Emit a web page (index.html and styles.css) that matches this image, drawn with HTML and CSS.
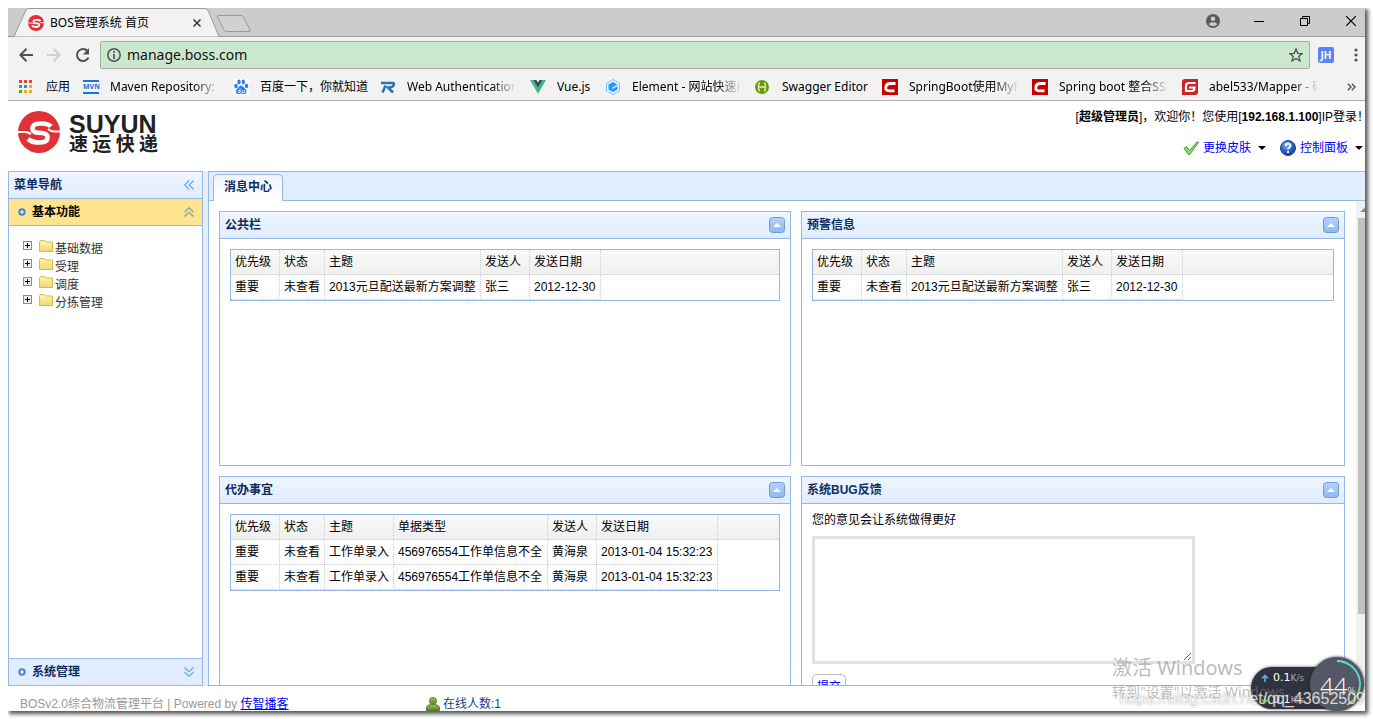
FILE: index.html
```html
<!DOCTYPE html>
<html lang="zh-CN">
<head>
<meta charset="utf-8">
<title>BOS管理系统 首页</title>
<link rel="stylesheet" href="styles.css">
</head>
<body>
<svg width="0" height="0" class="defs" aria-hidden="true">
  <defs>
    <linearGradient id="folderFill" x1="0" y1="0" x2="0" y2="1"><stop offset="0" stop-color="#fff4b0"/><stop offset="1" stop-color="#f0d870"/></linearGradient>
    <radialGradient id="helpFill" cx="0.4" cy="0.3" r="0.8"><stop offset="0" stop-color="#7fb2f5"/><stop offset="0.5" stop-color="#2a62c8"/><stop offset="1" stop-color="#123a90"/></radialGradient>
    <linearGradient id="userFill" x1="0" y1="0" x2="0" y2="1"><stop offset="0" stop-color="#9fc25a"/><stop offset="1" stop-color="#557f22"/></linearGradient>
    <linearGradient id="toolFill" x1="0" y1="0" x2="0" y2="1"><stop offset="0" stop-color="#b4d3fb"/><stop offset="1" stop-color="#8fb9f0"/></linearGradient>
    <linearGradient id="arcFill" x1="0" y1="0" x2="0" y2="1"><stop offset="0" stop-color="#4fe3dc"/><stop offset="0.6" stop-color="#55dfa0"/><stop offset="1" stop-color="#b6e048"/></linearGradient>
    <symbol id="brand" viewBox="0 0 42 42">
      <circle cx="21" cy="21" r="21" fill="#e03236"/>
      <path d="M33 15.500C31 13 28 12.500 22 12.500C16 12.500 14.500 15 14.500 17.500C14.500 20.500 17 21.500 20 21.700L24 22C27.500 22.300 29.500 24 29.500 26.500C29.500 30 27 31.500 22 31.500C16 31.500 13 31 10 28" fill="none" stroke="#fff" stroke-width="4.600"/>
      <path d="M-1 21H7Q10 21 13 23M30 18Q33 20.500 36 20.500H43" fill="none" stroke="#fff" stroke-width="2.200"/>
    </symbol>
    <symbol id="plusDot" viewBox="0 0 8 8"><circle cx="4" cy="4" r="3.700" fill="#4a83c9"/><path d="M4 2v4M2 4h4" stroke="#fff" stroke-width="1.200"/></symbol>
    <symbol id="expander" viewBox="0 0 9 9"><rect x=".5" y=".5" width="8" height="8" fill="#eee" stroke="#7b8ea5"/><path d="M2 4.500h5M4.500 2v5" stroke="#000"/></symbol>
    <symbol id="folder" viewBox="0 0 14 12"><path d="M.5 11.500V2L1.500.5H5.500L7 2H13.500V11.500Z" fill="url(#folderFill)" stroke="#d9b84a"/></symbol>
    <symbol id="collapse" viewBox="0 0 16 16"><rect x=".5" y=".5" width="15" height="15" rx="3" fill="url(#toolFill)" stroke="#6c9bd8"/><path d="M4 10h8L8 6Z" fill="#fff"/></symbol>
    <symbol id="csdn" viewBox="0 0 16 16"><path d="M0 0h16v16H0z" fill="#c80000"/><path d="M13.500 4.500H8.500C5.500 4.500 4 6 3.800 8.500C3.600 11 4.800 11.800 7 11.800H12.500" fill="none" stroke="#fff" stroke-width="2.800"/></symbol>
  </defs>
</svg>
<div class="window">
  <header class="tabstrip">
    <svg class="tabshape" width="250" height="29" viewBox="0 0 250 29">
      <path d="M0 28.500H6L18 2Q19 .5 20.500 .5H197Q199 .5 199.800 2L211 28.500" fill="#f2f2f2" stroke="#999"/>
      <path d="M210.500 7.500H233Q235 7.500 235.500 9L242 22Q242.500 23.500 241 23.500H219Q216.500 23.500 215.500 21.500L209.500 9Q209 7.500 210.500 7.500Z" fill="#d1d1d1" stroke="#999"/>
    </svg>
    <div class="tab"><svg width="16" height="16"><use href="#brand"/></svg><span>BOS管理系统 首页</span>
      <button class="bare" aria-label="关闭标签页"><svg width="10" height="10" viewBox="0 0 10 10"><path d="M1.500 1.500l7 7M8.500 1.500l-7 7" stroke="#333" stroke-width="1.500"/></svg></button></div>
    <div class="winbuttons">
      <button class="bare" aria-label="用户"><svg width="14" height="14" viewBox="0 0 14 14"><circle cx="7" cy="7" r="7" fill="#5a5a5a"/><circle cx="7" cy="4.700" r="2.300" fill="#ccc"/><path d="M2.800 10.500Q3.500 8.300 7 8.300T11.200 10.500Q7 13.500 2.800 10.500" fill="#ccc"/></svg></button>
      <button class="bare" aria-label="最小化"><svg width="10" height="12" viewBox="0 0 10 12"><path d="M0 6.500h10" stroke="#000"/></svg></button>
      <button class="bare" aria-label="还原"><svg width="10" height="10" viewBox="0 0 10 10" fill="none" stroke="#000"><path d="M.5 2.500h7v7h-7zM2.500 2.500V.5h7v7H7.500"/></svg></button>
      <button class="bare" aria-label="关闭"><svg width="10" height="10" viewBox="0 0 10 10"><path d="M0 0l10 10M10 0L0 10" stroke="#000" stroke-width="1.200"/></svg></button>
    </div>
  </header>

  <div class="toolbar">
    <div class="navbuttons">
      <button class="bare" aria-label="后退"><svg width="14" height="14" viewBox="0 0 14 14" fill="none" stroke="#505155" stroke-width="2"><path d="M14 7H1.500M7.500 .8L1.300 7l6.200 6.200"/></svg></button>
      <button class="bare" aria-label="前进"><svg width="14" height="14" viewBox="0 0 14 14" fill="none" stroke="#d0d0d0" stroke-width="2"><path d="M0 7h12.500M6.500 .8L12.700 7l-6.200 6.200"/></svg></button>
      <button class="bare" aria-label="刷新"><svg width="16" height="16" viewBox="0 0 16 16"><path d="M13.500 10.500A6 6 0 1 1 12.500 4" fill="none" stroke="#505155" stroke-width="2"/><path d="M14 1v6.500H7.800Z" fill="#505155"/></svg></button>
    </div>
    <div class="address">
      <svg width="14" height="14" viewBox="0 0 14 14"><circle cx="7" cy="7" r="6.200" fill="none" stroke="#505155" stroke-width="1.500"/><path d="M7 3v1.800M7 6v5" stroke="#505155" stroke-width="1.700"/></svg>
      <input type="text" value="manage.boss.com" aria-label="地址">
      <svg width="14" height="14" viewBox="0 0 14 14"><path d="M7 1l1.700 4.300 4.600.3-3.500 2.900 1.200 4.500L7 10.500 3 13l1.200-4.500L.7 5.600l4.600-.3Z" fill="none" stroke="#505155" stroke-width="1.300"/></svg>
    </div>
    <div class="ext">JH</div>
    <button class="bare" aria-label="菜单"><svg width="4" height="14" viewBox="0 0 4 14" fill="#505155"><circle cx="2" cy="2" r="1.600"/><circle cx="2" cy="7" r="1.600"/><circle cx="2" cy="12" r="1.600"/></svg></button>
  </div>

  <nav class="bookmarks" aria-label="书签">
    <a href="#"><svg width="14" height="14" viewBox="0 0 14 14"><path d="M0 0h3v3H0zM5 0h3v3H5zM10 0h3v3h-3z" fill="#ea4335"/><path d="M0 5h3v3H0z" fill="#34a853"/><path d="M5 5h3v3H5z" fill="#2a8af4"/><path d="M10 5h3v3h-3zM10 10h3v3h-3zM5 10h3v3H5z" fill="#f9ab00"/><path d="M0 10h3v3H0z" fill="#34a853"/></svg><span>应用</span></a>
    <a href="#"><b class="mvn">MVN</b><span class="fade">Maven Repository: Central</span></a>
    <a href="#"><svg width="16" height="16" viewBox="0 0 16 16"><path d="M0 0h16v16H0z" fill="#fff"/><g fill="#2c7ff0"><ellipse cx="3" cy="7" rx="1.800" ry="2.300"/><ellipse cx="6" cy="3" rx="1.700" ry="2.400"/><ellipse cx="10.300" cy="3" rx="1.700" ry="2.400"/><ellipse cx="13.500" cy="7" rx="1.800" ry="2.300"/><path d="M8 6.500C10 6.500 11 9 12.500 10.300S14 15 11 15 9 14.500 8 14.500 6.500 15 4.800 15 1.800 12 3.800 10.300 6 6.500 8 6.500Z"/></g><path d="M7 9.500v4H5.500q-1-1 0-2H7M9 11v2.500h2.500V11" fill="none" stroke="#fff" stroke-width=".8"/></svg><span>百度一下，你就知道</span></a>
    <a href="#"><svg width="16" height="14" viewBox="0 0 16 14"><path d="M1 3H12.500Q15 3 13.500 5.500Q12.500 7.500 8 7.500L13 12.500M5.500 5.500L2.500 12.500" fill="none" stroke="#2673b8" stroke-width="2.500"/></svg><span class="fade">Web Authentication Guide</span></a>
    <a href="#"><svg width="16" height="14" viewBox="0 0 16 14"><path d="M0 0h3.500L8 7.500 12.500 0H16L8 13.800Z" fill="#41b883"/><path d="M3.500 0h3L8 2.700 9.500 0h3L8 7.800Z" fill="#35495e"/></svg><span>Vue.js</span></a>
    <a href="#"><svg width="16" height="16" viewBox="0 0 16 16"><path d="M8 .5l6.500 3.700v7.600L8 15.500l-6.500-3.700V4.200Z" fill="#eaf5ff" stroke="#7cc0fa"/><path d="M8 3l4.500 2.500-5 3v1.500l5-3v3.500L8 13l-4.500-2.500v-5Z" fill="#209bf8"/></svg><span class="fade">Element - 网站快速成型</span></a>
    <a href="#"><svg width="16" height="16" viewBox="0 0 16 16"><circle cx="7" cy="8" r="7" fill="#6b9b0b"/><path d="M5 4Q3.500 4 3.800 6T2.800 8Q4 8 3.800 10T5 12M9 4Q10.500 4 10.200 6T11.200 8Q10 8 10.200 10T9 12M4.500 8h5" fill="none" stroke="#e7f5c2" stroke-width="1.300"/></svg><span>Swagger Editor</span></a>
    <a href="#"><svg width="16" height="16"><use href="#csdn"/></svg><span class="fade">SpringBoot使用MyBatis</span></a>
    <a href="#"><svg width="16" height="16"><use href="#csdn"/></svg><span class="fade">Spring boot 整合SSM框架</span></a>
    <a href="#"><svg width="16" height="16" viewBox="0 0 16 16"><path d="M3 0h13v13q0 3-3 3H0V3q0-3 3-3" fill="#cf2126"/><path d="M13.500 4H7Q4 4 4 7v5h6q2.500 0 2.500-3.500H7" fill="none" stroke="#fff" stroke-width="2.200"/></svg><span class="fade">abel533/Mapper - 码云</span></a>
    <button class="bare" aria-label="更多书签"><svg width="9" height="8" viewBox="0 0 9 8" fill="none" stroke="#555" stroke-width="1.400"><path d="M.8 .8L4 4 .8 7.200M4.800 .8L8 4 4.800 7.200"/></svg></button>
  </nav>

  <div class="banner">
    <div class="logo">
      <svg width="42" height="42"><use href="#brand"/></svg>
      <div class="logotext"><b>SUYUN</b><span>速 运 快 递</span></div>
    </div>
    <div class="account">
      <div class="welcome">[<b>超级管理员</b>]，欢迎你！您使用[<b>192.168.1.100</b>]IP登录！</div>
      <div class="menus">
        <a href="#"><svg width="16" height="16" viewBox="0 0 16 16"><path d="M1 8.500L3.500 6.500 6.500 10.500 14.500 1.500 15.500 2.500 6.500 14.500H5.500Z" fill="#8fdc6a" stroke="#3d9a2c"/></svg><span>更换皮肤</span><i></i></a>
        <a href="#"><svg width="16" height="16" viewBox="0 0 16 16"><circle cx="8" cy="8" r="7.500" fill="url(#helpFill)" stroke="#1a3f8c"/><path d="M5.600 6Q5.600 3.600 8 3.600T10.500 5.800Q10.500 7 9 7.800 8 8.300 8 9.500M8 11v2" fill="none" stroke="#fff" stroke-width="1.900"/></svg><span>控制面板</span><i></i></a>
      </div>
    </div>
  </div>

  <div class="layout">
    <aside class="west">
      <div class="bar">菜单导航<svg width="10" height="10" viewBox="0 0 10 10" fill="none" stroke="#6aaeea" stroke-width="1.300"><path d="M5 .5L.8 5 5 9.500M9.500 .5L5.300 5l4.200 4.500"/></svg></div>
      <button class="bar group open"><svg width="8" height="8"><use href="#plusDot"/></svg><span>基本功能</span><svg width="10" height="10" viewBox="0 0 10 10" fill="none" stroke="#7fa9a5" stroke-width="1.300"><path d="M.5 5L5 .8 9.500 5M.5 9.500L5 5.300l4.500 4.200"/></svg></button>
      <ul class="tree">
        <li><svg width="9" height="9"><use href="#expander"/></svg><svg width="14" height="12"><use href="#folder"/></svg><span>基础数据</span></li>
        <li><svg width="9" height="9"><use href="#expander"/></svg><svg width="14" height="12"><use href="#folder"/></svg><span>受理</span></li>
        <li><svg width="9" height="9"><use href="#expander"/></svg><svg width="14" height="12"><use href="#folder"/></svg><span>调度</span></li>
        <li><svg width="9" height="9"><use href="#expander"/></svg><svg width="14" height="12"><use href="#folder"/></svg><span>分拣管理</span></li>
      </ul>
      <button class="bar group last"><svg width="8" height="8"><use href="#plusDot"/></svg><span>系统管理</span><svg width="10" height="10" viewBox="0 0 10 10" fill="none" stroke="#6aaeea" stroke-width="1.300"><path d="M.5 .5L5 4.700 9.500 .5M.5 5L5 9.200 9.500 5"/></svg></button>
    </aside>
    <main class="center">
      <div class="tabs"><button>消息中心</button></div>
      <div class="content">
        <div class="portal">
          <section class="panel">
            <h2>公共栏<button class="bare" aria-label="折叠"><svg width="16" height="16"><use href="#collapse"/></svg></button></h2>
            <div class="body"><table>
              <colgroup><col class="w49"><col class="w45"><col class="w156"><col class="w49"><col class="w71"><col></colgroup>
              <thead><tr><th>优先级</th><th>状态</th><th>主题</th><th>发送人</th><th>发送日期</th><td></td></tr></thead>
              <tbody><tr><td>重要</td><td>未查看</td><td>2013元旦配送最新方案调整</td><td>张三</td><td>2012-12-30</td></tr></tbody>
            </table></div>
          </section>
          <section class="panel">
            <h2>预警信息<button class="bare" aria-label="折叠"><svg width="16" height="16"><use href="#collapse"/></svg></button></h2>
            <div class="body"><table>
              <colgroup><col class="w49"><col class="w45"><col class="w156"><col class="w49"><col class="w71"><col></colgroup>
              <thead><tr><th>优先级</th><th>状态</th><th>主题</th><th>发送人</th><th>发送日期</th><td></td></tr></thead>
              <tbody><tr><td>重要</td><td>未查看</td><td>2013元旦配送最新方案调整</td><td>张三</td><td>2012-12-30</td></tr></tbody>
            </table></div>
          </section>
          <section class="panel">
            <h2>代办事宜<button class="bare" aria-label="折叠"><svg width="16" height="16"><use href="#collapse"/></svg></button></h2>
            <div class="body"><table>
              <colgroup><col class="w49"><col class="w45"><col class="w69"><col class="w154"><col class="w49"><col class="w121"><col></colgroup>
              <thead><tr><th>优先级</th><th>状态</th><th>主题</th><th>单据类型</th><th>发送人</th><th>发送日期</th><td></td></tr></thead>
              <tbody><tr><td>重要</td><td>未查看</td><td>工作单录入</td><td>456976554工作单信息不全</td><td>黄海泉</td><td>2013-01-04 15:32:23</td></tr>
              <tr><td>重要</td><td>未查看</td><td>工作单录入</td><td>456976554工作单信息不全</td><td>黄海泉</td><td>2013-01-04 15:32:23</td></tr></tbody>
            </table></div>
          </section>
          <section class="panel">
            <h2>系统BUG反馈<button class="bare" aria-label="折叠"><svg width="16" height="16"><use href="#collapse"/></svg></button></h2>
            <form class="body feedback">
              <label for="fb">您的意见会让系统做得更好</label>
              <textarea id="fb"></textarea>
              <button type="button">提交</button>
            </form>
          </section>
        </div>
        <div class="scroll"><svg width="9" height="17" viewBox="0 0 9 17"><path d="M4 11h5V6.500Z" fill="#8a8a8a"/></svg><div class="thumb"></div></div>
      </div>
    </main>
  </div>

  <footer class="footer">
    <div class="copy">BOSv2.0综合物流管理平台 | Powered by <a href="#">传智播客</a></div>
    <div class="online"><svg width="14" height="14" viewBox="0 0 14 14"><path d="M.5 13.500V11Q.5 7.500 7 7.500T13.500 11V13.500Z" fill="url(#userFill)" stroke="#55752c"/><circle cx="7" cy="4" r="3.600" fill="url(#userFill)" stroke="#68883c"/></svg>在线人数:1</div>
  </footer>

  <div class="meter">
    <div class="speeds">
      <div><svg width="8" height="8" viewBox="0 0 8 8"><path d="M4 8V1.500M1 4.500L4 1.500 7 4.500" fill="none" stroke="#4ab8f5" stroke-width="1.600"/></svg><span>0.1<small>K/s</small></span></div>
      <div><svg width="8" height="8" viewBox="0 0 8 8"><path d="M4 0V6.500M1 3.500L4 6.500 7 3.500" fill="none" stroke="#4ecb5a" stroke-width="1.600"/></svg><span>0.1<small>K/s</small></span></div>
    </div>
    <div class="dial"><svg width="54" height="54" viewBox="0 0 54 54"><path d="M27 4A23 23 0 0 1 37 47.700" fill="none" stroke="url(#arcFill)" stroke-width="1.800"/></svg><span>44<small>%</small></span></div>
  </div>
  <div class="activate"><p>激活 Windows</p><p>转到"设置"以激活 Windows。</p></div>
  <div class="watermark">https://blog.csdn.net/qq_43652509</div>
</div>
</body>
</html>
```
FILE: styles.css
```css
* { box-sizing: border-box; }
body {
  margin: 0;
  padding: 8px;
  height: 100vh;
  background: #fff;
  color: #000;
  font: 12px/18px "Liberation Sans", "Noto Sans CJK SC", sans-serif;
}
button, textarea, input { font: inherit; }
svg { display: block; flex: none; }
a { color: #00f; }
.defs { position: absolute; }
.bare { display: block; padding: 0; border: 0; background: none; flex: none; }

.window {
  position: relative;
  display: flex;
  flex-direction: column;
  height: 100%;
  overflow: hidden;
  background: #fff;
}
body::after {
  content: "";
  position: absolute;
  inset: 8px;
  box-shadow: 2px 2px 4px 1px #555;
  clip-path: inset(0 -8px -8px 0);
  pointer-events: none;
}

/* browser frame */
.tabstrip {
  position: relative;
  display: flex;
  flex: none;
  justify-content: space-between;
  height: 29px;
  background: #ccc;
  border-bottom: 1px solid #999;
}
.tabshape { position: absolute; left: 0; top: 0; }
.tab {
  position: relative;
  display: flex;
  align-items: center;
  gap: 6px;
  width: 194px;
  padding: 1px 0 0 20px;
  font-family: "Noto Sans", "Noto Sans CJK SC", sans-serif;
}
.tab .bare { margin-left: auto; }
.winbuttons {
  display: flex;
  align-items: center;
  gap: 36px;
  padding: 0 9px 3px 0;
}
.winbuttons .bare:first-child { margin-right: -2px; }
.toolbar {
  display: flex;
  flex: none;
  align-items: center;
  gap: 8px;
  height: 36px;
  padding: 0 7px 0 11px;
  background: #f2f2f2;
}
.navbuttons { display: flex; align-items: center; gap: 14px; width: 73px; }
.address {
  display: flex;
  flex: 1;
  align-items: center;
  gap: 6px;
  height: 28px;
  padding: 0 6px;
  border: 1px solid #a9a9a9;
  border-radius: 2px;
  background: #cbe8cf;
}
.address input {
  flex: 1;
  min-width: 0;
  padding: 0;
  border: 0;
  background: none;
  color: #111;
  font: 14px/20px "Noto Sans", sans-serif;
}
.ext {
  width: 16px;
  height: 16px;
  margin-right: 12px;
  border-radius: 2px;
  background: #5b82f7;
  color: #fff;
  font: bold 10px/16px "Open Sans", sans-serif;
  text-align: center;
}
.bookmarks {
  display: grid;
  flex: none;
  grid-template-columns: 64px 150px 147px 150px 75px 150px 127px 150px 150px 1fr 9px;
  align-items: center;
  height: 28px;
  padding: 0 9px 0 11px;
  background: #f2f2f2;
  border-bottom: 1px solid #b0b0b0;
  font-family: "Noto Sans", "Noto Sans CJK SC", sans-serif;
}
.bookmarks a {
  display: grid;
  grid-template-columns: 16px auto;
  gap: 11px;
  align-items: center;
  justify-content: start;
  color: #000;
  text-decoration: none;
  white-space: nowrap;
}
.bookmarks span { max-width: 108px; overflow: hidden; }
.fade {
  -webkit-mask-image: linear-gradient(to right, #000 84px, transparent 110px);
  mask-image: linear-gradient(to right, #000 84px, transparent 110px);
}
.mvn {
  border: solid #1c74d8;
  border-width: 2px 0;
  color: #1c74d8;
  font: bold 7px/10px "Open Sans", sans-serif;
  text-align: center;
}

/* page banner */
.banner {
  display: flex;
  flex: none;
  justify-content: space-between;
  height: 70px;
  padding: 7px 0 0 10px;
}
.logo { display: flex; gap: 9px; padding-top: 3px; }
.logotext { color: #222; white-space: nowrap; }
.logotext b { display: block; font: bold 25px/26px "Liberation Sans", sans-serif; }
.logotext span { display: block; font: bold 19px/12px "Noto Sans CJK SC", sans-serif; }
.account { text-align: right; white-space: nowrap; }
.welcome { margin-right: -4px; }
.menus { display: flex; justify-content: flex-end; gap: 14px; padding: 13px 2px 0 0; }
.menus a { display: flex; align-items: center; gap: 4px; text-decoration: none; }
.menus i { margin-left: 3px; border: 4px solid transparent; border-top-color: #000; border-bottom: 0; }

/* layout */
.layout { display: flex; flex: 1; min-height: 0; gap: 5px; background: #e6eef8; }
.west {
  display: flex;
  flex: none;
  flex-direction: column;
  width: 195px;
  border: 1px solid #95b8e7;
  background: #fff;
}
.bar {
  display: flex;
  flex: none;
  align-items: center;
  justify-content: space-between;
  height: 27px;
  padding: 0 8px 0 5px;
  border: 0;
  border-bottom: 1px solid #95b8e7;
  background: linear-gradient(#eff5ff, #e0ecff);
  color: #0e2d5f;
  font-weight: bold;
}
.group { gap: 6px; padding-left: 9px; background: #e0ecff; }
.group span { flex: 1; text-align: left; }
.group.open { background: #ffe48d; color: #000; }
.group.last { border-top: 1px solid #95b8e7; border-bottom: 0; }
.tree { flex: 1; margin: 0; padding: 12px 14px; list-style: none; color: #333; }
.tree li { display: flex; height: 18px; }
.tree li svg:first-child { margin: 3px 7px 0 0; }
.tree li svg { margin: 2px 2px 0 0; }
.tree li span { padding-top: 2px; }
.center {
  display: flex;
  flex: 1;
  flex-direction: column;
  min-width: 0;
  border: 1px solid #95b8e7;
  border-right: 0;
  background: #fff;
}
.tabs {
  flex: none;
  height: 29px;
  padding: 2px 4px 0;
  border-bottom: 1px solid #95b8e7;
  background: #e0ecff;
}
.tabs button {
  display: block;
  height: 27px;
  padding: 0 10px 2px;
  border: 1px solid #95b8e7;
  border-bottom: 0;
  border-radius: 5px 5px 0 0;
  background: linear-gradient(#eff5ff, #fff);
  color: #0e2d5f;
  font-weight: bold;
}
.content { display: flex; flex: 1; min-height: 0; overflow: hidden; }
.portal {
  display: grid;
  flex: 1;
  grid-template-columns: 572fr 544fr;
  grid-auto-rows: 255px;
  gap: 10px;
  min-width: 0;
  padding: 10px 11px 0 10px;
}
.panel { min-width: 0; border: 1px solid #95b8e7; }
.panel h2 {
  display: flex;
  align-items: center;
  justify-content: space-between;
  height: 27px;
  margin: 0;
  padding: 0 5px;
  border-bottom: 1px solid #95b8e7;
  background: linear-gradient(#eff5ff, #e0ecff);
  color: #0e2d5f;
  font-size: 12px;
}
.body { padding: 10px; }
table {
  width: 100%;
  table-layout: fixed;
  border: 1px solid #95b8e7;
  border-spacing: 0;
}
th, td {
  height: 25px;
  padding: 0 0 0 4px;
  border: dotted #ccc;
  border-width: 0 1px 1px 0;
  font-weight: normal;
  line-height: 18px;
  text-align: left;
  white-space: nowrap;
}
thead th, thead td { border-bottom: 1px solid #ddd; }
thead td { border-right: 0; }
thead tr { background: linear-gradient(#f9f9f9, #efefef); }
.w45 { width: 45px; }
.w49 { width: 49px; }
.w69 { width: 69px; }
.w71 { width: 71px; }
.w121 { width: 121px; }
.w154 { width: 154px; }
.w156 { width: 156px; }
.feedback { display: flex; flex-direction: column; align-items: flex-start; padding-top: 7px; }
.feedback textarea {
  width: 383px;
  height: 128px;
  margin: 7px 0 10px;
  border: 3px solid #e2e2e2;
  background: #fff;
}
.feedback button {
  padding: 3px 4px;
  border: 1px solid #bbb;
  border-radius: 5px;
  background: #fff;
  color: #00f;
}
.scroll { flex: none; width: 9px; background: #f1f1f1; }
.thumb { height: 396px; margin-left: 2px; background: #c1c1c1; }

.footer { display: flex; flex: none; height: 25px; padding: 9px 12px 0; white-space: nowrap; }
.copy { width: 406px; color: #999; }
.online { display: flex; gap: 3px; align-items: center; height: 18px; color: #15428b; }

/* desktop overlays */
.activate {
  position: absolute;
  right: 65px;
  bottom: 9px;
  width: 188px;
  color: rgba(130, 130, 130, .55);
  font: 14px/20px "Noto Sans", "Noto Sans CJK SC", sans-serif;
  white-space: nowrap;
}
.activate p { margin: 0; }
.activate p:first-child { font-size: 20px; line-height: 28px; }
.meter { position: absolute; right: 0; bottom: 0; width: 114px; height: 54px; }
.speeds {
  width: 94px;
  height: 42px;
  margin-top: 10px;
  padding: 0 10px;
  border-radius: 21px 0 0 21px;
  background: #30333d;
  box-shadow: 0 0 3px #555;
  color: #fff;
  font: 11px/21px "DejaVu Sans", sans-serif;
}
.speeds div { display: flex; align-items: center; gap: 4px; }
.speeds small { color: #aaa; font-size: 9px; }
.dial {
  position: absolute;
  left: 59px;
  top: 0;
  width: 54px;
  height: 54px;
  border-radius: 50%;
  background: #545866;
  box-shadow: 0 0 3px #222;
  color: #fff;
}
.dial svg { position: absolute; }
.dial span {
  position: absolute;
  left: 10px;
  top: 15px;
  font: 300 24px/28px "Open Sans", sans-serif;
}
.dial small { font-size: 10px; }
.watermark {
  position: absolute;
  right: 0;
  bottom: 2px;
  color: rgba(255, 255, 255, .75);
  font-size: 16px;
  line-height: 20px;
  text-shadow: 0 0 2px rgba(110, 110, 110, .6);
}
```
